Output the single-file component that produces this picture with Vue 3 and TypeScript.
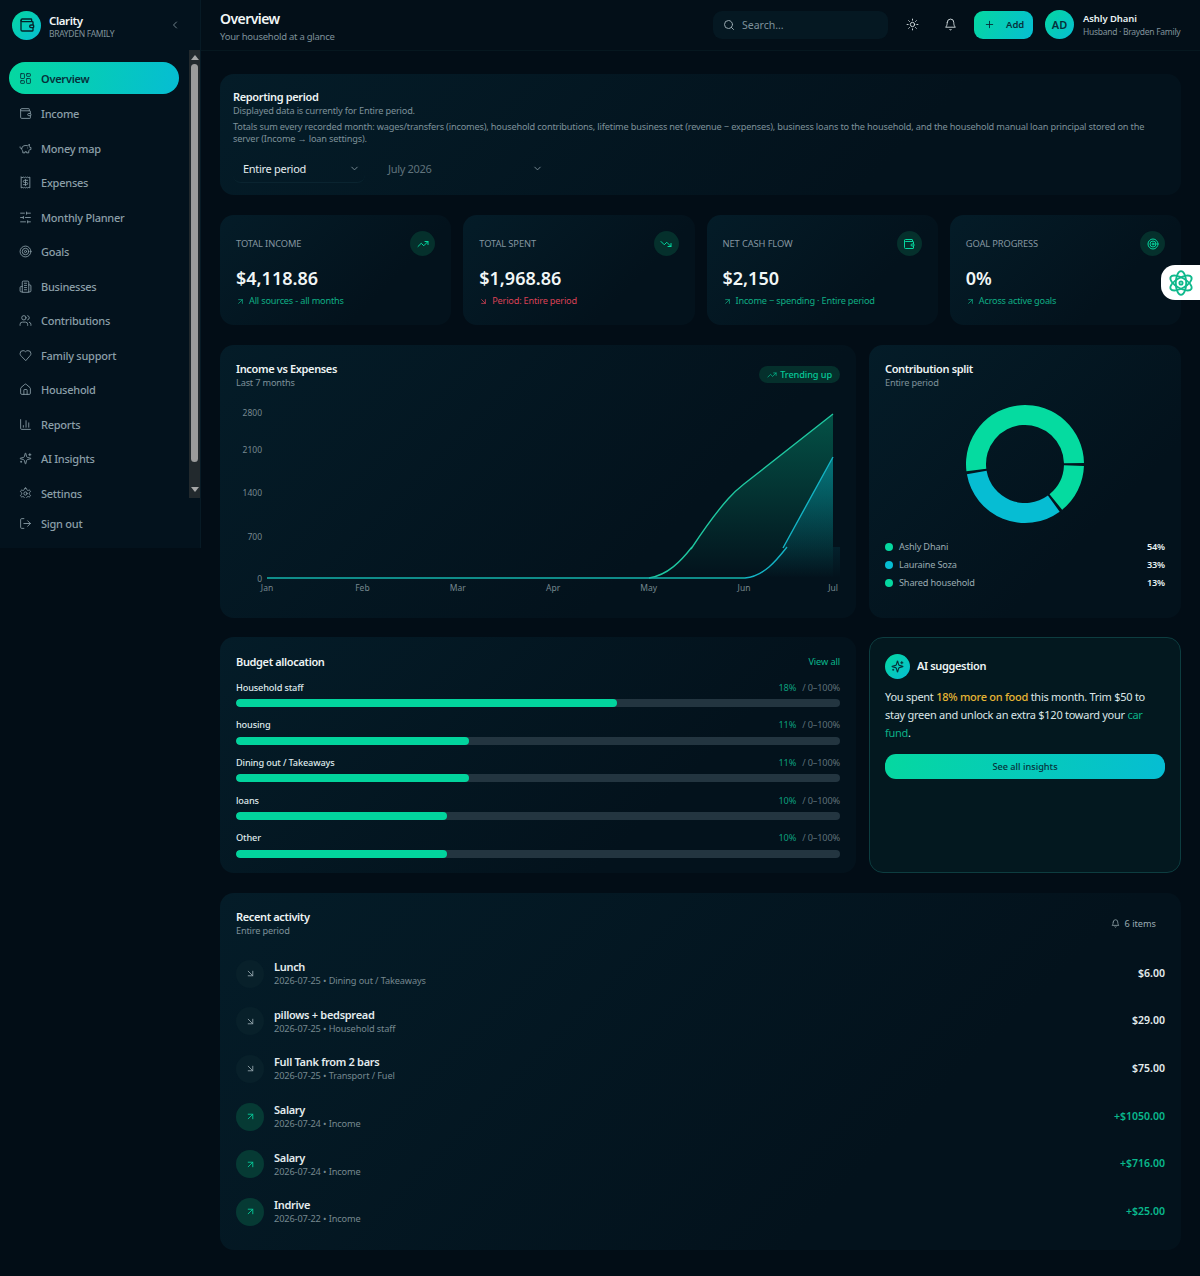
<script setup lang="ts">
const icons: Record<string, string> = {
  wallet: '<path d="M19 7V4a1 1 0 0 0-1-1H5a2 2 0 0 0 0 4h15a1 1 0 0 1 1 1v4h-3a2 2 0 0 0 0 4h3a1 1 0 0 0 1-1v-2a1 1 0 0 0-1-1"/><path d="M3 5v14a2 2 0 0 0 2 2h15a1 1 0 0 0 1-1v-4"/>',
  grid: '<rect x="3" y="3" width="7" height="9" rx="1"/><rect x="14" y="3" width="7" height="5" rx="1"/><rect x="14" y="12" width="7" height="9" rx="1"/><rect x="3" y="16" width="7" height="5" rx="1"/>',
  piggy: '<path d="M19 5c-1.5 0-2.8 1.4-3 2-3.5-1.5-11-.3-11 5 0 1.8 0 3 2 4.5V20h4v-2h3v2h4v-4c1-.5 1.7-1 2-2h2v-4h-2c0-1-.5-1.5-1-2V5z"/><path d="M2 9v1c0 1.1.9 2 2 2h1"/><path d="M16 11h.01"/>',
  receipt: '<path d="M4 2v20l2-1 2 1 2-1 2 1 2-1 2 1 2-1 2 1V2l-2 1-2-1-2 1-2-1-2 1-2-1-2 1Z"/><path d="M16 8h-6a2 2 0 1 0 0 4h4a2 2 0 1 1 0 4H8"/><path d="M12 17.5v-11"/>',
  sliders: '<path d="M21 4h-7M10 4H3M21 12h-9M8 12H3M21 20h-5M12 20H3M14 2v4M8 10v4M16 18v4"/>',
  target: '<circle cx="12" cy="12" r="10"/><circle cx="12" cy="12" r="6"/><circle cx="12" cy="12" r="2"/>',
  building: '<path d="M6 22V4a2 2 0 0 1 2-2h8a2 2 0 0 1 2 2v18Z"/><path d="M6 12H4a2 2 0 0 0-2 2v6a2 2 0 0 0 2 2h2"/><path d="M18 9h2a2 2 0 0 1 2 2v9a2 2 0 0 1-2 2h-2"/><path d="M10 6h4M10 10h4M10 14h4M10 18h4"/>',
  users: '<path d="M16 21v-2a4 4 0 0 0-4-4H6a4 4 0 0 0-4 4v2"/><circle cx="9" cy="7" r="4"/><path d="M22 21v-2a4 4 0 0 0-3-3.87"/><path d="M16 3.13a4 4 0 0 1 0 7.75"/>',
  heart: '<path d="M19 14c1.49-1.46 3-3.21 3-5.5A5.5 5.5 0 0 0 16.5 3c-1.76 0-3 .5-4.5 2-1.5-1.5-2.74-2-4.5-2A5.5 5.5 0 0 0 2 8.5c0 2.3 1.5 4.05 3 5.5l7 7Z"/>',
  home: '<path d="M3 10a2 2 0 0 1 .709-1.528l7-6a2 2 0 0 1 2.582 0l7 6A2 2 0 0 1 21 10v9a2 2 0 0 1-2 2H5a2 2 0 0 1-2-2z"/><path d="M15 21v-8a1 1 0 0 0-1-1h-4a1 1 0 0 0-1 1v8"/>',
  chart: '<path d="M3 3v16a2 2 0 0 0 2 2h16"/><path d="M8 17v-3M13 17V5M18 17V9"/>',
  sparkles: '<path d="M9.937 15.5A2 2 0 0 0 8.5 14.063l-6.135-1.582a.5.5 0 0 1 0-.962L8.5 9.936A2 2 0 0 0 9.937 8.5l1.582-6.135a.5.5 0 0 1 .963 0L14.063 8.5A2 2 0 0 0 15.5 9.937l6.135 1.581a.5.5 0 0 1 0 .964L15.5 14.063a2 2 0 0 0-1.437 1.437l-1.582 6.135a.5.5 0 0 1-.963 0z"/><path d="M20 3v4M22 5h-4M4 17v2M5 18H3"/>',
  settings: '<path d="M12.22 2h-.44a2 2 0 0 0-2 2v.18a2 2 0 0 1-1 1.73l-.43.25a2 2 0 0 1-2 0l-.15-.08a2 2 0 0 0-2.73.73l-.22.38a2 2 0 0 0 .73 2.73l.15.1a2 2 0 0 1 1 1.72v.51a2 2 0 0 1-1 1.74l-.15.09a2 2 0 0 0-.73 2.73l.22.38a2 2 0 0 0 2.73.73l.15-.08a2 2 0 0 1 2 0l.43.25a2 2 0 0 1 1 1.73V20a2 2 0 0 0 2 2h.44a2 2 0 0 0 2-2v-.18a2 2 0 0 1 1-1.73l.43-.25a2 2 0 0 1 2 0l.15.08a2 2 0 0 0 2.73-.73l.22-.39a2 2 0 0 0-.73-2.73l-.15-.08a2 2 0 0 1-1-1.74v-.5a2 2 0 0 1 1-1.74l.15-.09a2 2 0 0 0 .73-2.73l-.22-.38a2 2 0 0 0-2.73-.73l-.15.08a2 2 0 0 1-2 0l-.43-.25a2 2 0 0 1-1-1.73V4a2 2 0 0 0-2-2z"/><circle cx="12" cy="12" r="3"/>',
  logout: '<path d="M9 21H5a2 2 0 0 1-2-2V5a2 2 0 0 1 2-2h4"/><path d="m16 17 5-5-5-5"/><path d="M21 12H9"/>',
  left: '<path d="m15 18-6-6 6-6"/>',
  down: '<path d="m6 9 6 6 6-6"/>',
  search: '<circle cx="11" cy="11" r="8"/><path d="m21 21-4.3-4.3"/>',
  sun: '<circle cx="12" cy="12" r="4"/><path d="M12 2v2M12 20v2M4.93 4.93l1.41 1.41M17.66 17.66l1.41 1.41M2 12h2M20 12h2M6.34 17.66l-1.41 1.41M19.07 4.93l-1.41 1.41"/>',
  bell: '<path d="M6 8a6 6 0 0 1 12 0c0 7 3 9 3 9H3s3-2 3-9"/><path d="M10.3 21a1.94 1.94 0 0 0 3.4 0"/>',
  plus: '<path d="M5 12h14M12 5v14"/>',
  up: '<path d="M22 7l-8.5 8.5-5-5L2 17"/><path d="M16 7h6v6"/>',
  fall: '<path d="M22 17l-8.5-8.5-5 5L2 7"/><path d="M16 17h6v-6"/>',
  ne: '<path d="M7 7h10v10"/><path d="M7 17 17 7"/>',
  se: '<path d="m7 7 10 10"/><path d="M17 7v10H7"/>',
  atom: '<circle cx="12" cy="12" r="1.5"/><ellipse cx="12" cy="12" rx="11" ry="4.8" transform="rotate(90 12 12)"/><ellipse cx="12" cy="12" rx="11" ry="4.8" transform="rotate(30 12 12)"/><ellipse cx="12" cy="12" rx="11" ry="4.8" transform="rotate(150 12 12)"/>',
}

const nav = [
  ['grid', 'Overview'], ['wallet', 'Income'], ['piggy', 'Money map'], ['receipt', 'Expenses'],
  ['sliders', 'Monthly Planner'], ['target', 'Goals'], ['building', 'Businesses'], ['users', 'Contributions'],
  ['heart', 'Family support'], ['home', 'Household'], ['chart', 'Reports'], ['sparkles', 'AI Insights'], ['settings', 'Settings'],
]

const kpis = [
  { label: 'Total income', value: '$4,118.86', note: 'All sources - all months', icon: 'up', arrow: 'ne', bad: false },
  { label: 'Total spent', value: '$1,968.86', note: 'Period: Entire period', icon: 'fall', arrow: 'se', bad: true },
  { label: 'Net cash flow', value: '$2,150', note: 'Income − spending · Entire period', icon: 'wallet', arrow: 'ne', bad: false },
  { label: 'Goal progress', value: '0%', note: 'Across active goals', icon: 'target', arrow: 'ne', bad: false },
]

const yTicks = [
  { label: '2800', y: 17 }, { label: '2100', y: 54 }, { label: '1400', y: 97 }, { label: '700', y: 141 }, { label: '0', y: 183 },
]
const xTicks = ['Jan', 'Feb', 'Mar', 'Apr', 'May', 'Jun', 'Jul'].map((label, i) => ({ label, x: 31 + i * 95.4 }))

// donut angles are measured counter-clockwise from 3 o'clock
function arc(from: number, to: number) {
  const [cx, cy, R, r] = [60, 60, 59, 39]
  const pt = (rad: number, a: number) => {
    const t = (a * Math.PI) / 180
    return `${(cx + rad * Math.cos(t)).toFixed(2)} ${(cy - rad * Math.sin(t)).toFixed(2)}`
  }
  const big = to - from > 180 ? 1 : 0
  return `M${pt(R, from)}A${R} ${R} 0 ${big} 0 ${pt(R, to)}L${pt(r, to)}A${r} ${r} 0 ${big} 1 ${pt(r, from)}Z`
}
const slices = [
  { d: arc(1, 187), color: '#05dba0' },
  { d: arc(190, 306), color: '#06bdd3' },
  { d: arc(309, 358), color: '#05dba0' },
]
const legend = [
  { name: 'Ashly Dhani', pct: '54%', color: '#05d8a0' },
  { name: 'Lauraine Soza', pct: '33%', color: '#06bdd3' },
  { name: 'Shared household', pct: '13%', color: '#05d8a0' },
]

const budget = [
  { name: 'Household staff', pct: '18%', width: 63 },
  { name: 'housing', pct: '11%', width: 38.5 },
  { name: 'Dining out / Takeaways', pct: '11%', width: 38.5 },
  { name: 'loans', pct: '10%', width: 35 },
  { name: 'Other', pct: '10%', width: 35 },
]

const activity = [
  { title: 'Lunch', meta: '2026-07-25 • Dining out / Takeaways', amount: '$6.00', income: false },
  { title: 'pillows + bedspread', meta: '2026-07-25 • Household staff', amount: '$29.00', income: false },
  { title: 'Full Tank from 2 bars', meta: '2026-07-25 • Transport / Fuel', amount: '$75.00', income: false },
  { title: 'Salary', meta: '2026-07-24 • Income', amount: '+$1050.00', income: true },
  { title: 'Salary', meta: '2026-07-24 • Income', amount: '+$716.00', income: true },
  { title: 'Indrive', meta: '2026-07-22 • Income', amount: '+$25.00', income: true },
]
</script>

<template>
  <div class="app">
    <aside class="sidebar">
      <div class="brand">
        <span class="logo"><svg class="ic" viewBox="0 0 24 24" v-html="icons.wallet"></svg></span>
        <div class="brand-text">
          <strong>Clarity</strong>
          <small>BRAYDEN FAMILY</small>
        </div>
        <svg class="ic collapse" viewBox="0 0 24 24" v-html="icons.left"></svg>
      </div>
      <div class="nav-wrap">
        <nav class="nav">
          <a v-for="(item, i) in nav" :key="item[1]" class="nav-item" :class="{ active: i === 0 }">
            <svg class="ic" viewBox="0 0 24 24" v-html="icons[item[0]]"></svg>
            <span>{{ item[1] }}</span>
          </a>
        </nav>
        <div class="scrollbar">
          <i class="arrow-up"></i>
          <b class="thumb"></b>
          <i class="arrow-down"></i>
        </div>
      </div>
      <a class="nav-item signout">
        <svg class="ic" viewBox="0 0 24 24" v-html="icons.logout"></svg>
        <span>Sign out</span>
      </a>
    </aside>

    <div class="content">
      <header class="topbar">
        <div class="heading">
          <h1>Overview</h1>
          <p>Your household at a glance</p>
        </div>
        <div class="search">
          <svg class="ic" viewBox="0 0 24 24" v-html="icons.search"></svg>
          <span>Search...</span>
        </div>
        <svg class="ic tool sun" viewBox="0 0 24 24" v-html="icons.sun"></svg>
        <svg class="ic tool bell" viewBox="0 0 24 24" v-html="icons.bell"></svg>
        <button class="add">
          <svg class="ic" viewBox="0 0 24 24" v-html="icons.plus"></svg>
          <span>Add</span>
        </button>
        <span class="avatar">AD</span>
        <div class="who">
          <strong>Ashly Dhani</strong>
          <small>Husband · Brayden Family</small>
        </div>
      </header>

      <main class="main">
        <section class="card period">
          <h2>Reporting period</h2>
          <p class="muted first">Displayed data is currently for Entire period.</p>
          <p class="muted">Totals sum every recorded month: wages/transfers (incomes), household contributions, lifetime business net (revenue − expenses), business loans to the household, and the household manual loan principal stored on the server (Income → loan settings).</p>
          <div class="selects">
            <div class="select">
              <span>Entire period</span>
              <svg class="ic" viewBox="0 0 24 24" v-html="icons.down"></svg>
            </div>
            <div class="select disabled">
              <span>July 2026</span>
              <svg class="ic" viewBox="0 0 24 24" v-html="icons.down"></svg>
            </div>
          </div>
        </section>

        <section class="kpis">
          <div v-for="k in kpis" :key="k.label" class="card kpi">
            <div class="kpi-top">
              <span class="kpi-label">{{ k.label }}</span>
              <span class="kpi-icon"><svg class="ic" viewBox="0 0 24 24" v-html="icons[k.icon]"></svg></span>
            </div>
            <div class="kpi-value">{{ k.value }}</div>
            <div class="kpi-note" :class="{ bad: k.bad }">
              <svg class="ic" viewBox="0 0 24 24" v-html="icons[k.arrow]"></svg>
              <span>{{ k.note }}</span>
            </div>
          </div>
        </section>

        <section class="row charts">
          <div class="card chart-card">
            <div class="card-head">
              <div>
                <h2>Income vs Expenses</h2>
                <p class="muted">Last 7 months</p>
              </div>
              <span class="pill">
                <svg class="ic" viewBox="0 0 24 24" v-html="icons.up"></svg>
                Trending up
              </span>
            </div>
            <svg class="line-chart" viewBox="0 0 604 200" width="604" height="200">
              <defs>
                <linearGradient id="gIncome" x1="0" y1="0" x2="0" y2="1">
                  <stop offset="0" stop-color="#05d8a0" stop-opacity=".32" />
                  <stop offset="1" stop-color="#05d8a0" stop-opacity="0" />
                </linearGradient>
                <linearGradient id="gSpent" x1="0" y1="0" x2="0" y2="1">
                  <stop offset="0" stop-color="#06bdd3" stop-opacity=".42" />
                  <stop offset="1" stop-color="#06bdd3" stop-opacity="0" />
                </linearGradient>
              </defs>
              <text v-for="t in yTicks" :key="t.label" x="26" :y="t.y + 3.5" text-anchor="end" class="tick">{{ t.label }}</text>
              <text v-for="(t, i) in xTicks" :key="t.label" :x="i === 6 ? 602 : t.x" y="196" :text-anchor="i === 6 ? 'end' : 'middle'" class="tick">{{ t.label }}</text>
              <path d="M413 183C432 180 445 166 456 152L455 154Q476 122 492 104Q499 96 508 89L597 19V183Z" fill="url(#gIncome)" />
              <path d="M509 183C528 181 540 166 551 152L547 153L597 62V183Z" fill="url(#gSpent)" />
              <path d="M597 152H604V183H597Z" fill="url(#gSpent)" opacity=".2" />
              <path d="M413 183C432 180 445 166 456 152M455 154Q476 122 492 104Q499 96 508 89L597 19" fill="none" stroke="#1fc7a0" stroke-width="1.4" />
              <path d="M509 183C528 181 540 166 551 152M547 153L597 62" fill="none" stroke="#14b3c4" stroke-width="1.4" />
              <path d="M31 183H509" fill="none" stroke="#14b6ae" stroke-width="1.6" />
            </svg>
          </div>

          <div class="card split">
            <h2>Contribution split</h2>
            <p class="muted">Entire period</p>
            <svg class="donut" viewBox="0 0 120 120" width="120" height="120">
              <path v-for="s in slices" :key="s.d" :d="s.d" :fill="s.color" />
            </svg>
            <ul class="legend">
              <li v-for="l in legend" :key="l.name">
                <i :style="{ background: l.color }"></i>
                <span>{{ l.name }}</span>
                <b>{{ l.pct }}</b>
              </li>
            </ul>
          </div>
        </section>

        <section class="row lower">
          <div class="card budget">
            <div class="card-head">
              <h2>Budget allocation</h2>
              <a class="view-all">View all</a>
            </div>
            <div v-for="b in budget" :key="b.name" class="budget-row">
              <div class="budget-text">
                <span class="budget-name">{{ b.name }}</span>
                <span class="budget-pct">{{ b.pct }}<em>/ 0–100%</em></span>
              </div>
              <div class="track"><div class="fill" :style="{ width: b.width + '%' }"></div></div>
            </div>
          </div>

          <div class="card ai">
            <div class="ai-head">
              <span class="ai-icon"><svg class="ic" viewBox="0 0 24 24" v-html="icons.sparkles"></svg></span>
              <h2>AI suggestion</h2>
            </div>
            <p class="ai-text">You spent <span class="amber">18% more on food</span> this month. Trim $50 to stay green and unlock an extra $120 toward your <span class="teal">car fund</span>.</p>
            <button class="insights">See all insights</button>
          </div>
        </section>

        <section class="card recent">
          <div class="card-head">
            <div>
              <h2>Recent activity</h2>
              <p class="muted">Entire period</p>
            </div>
            <span class="count">
              <svg class="ic" viewBox="0 0 24 24" v-html="icons.bell"></svg>
              6 items
            </span>
          </div>
          <div v-for="(a, i) in activity" :key="i" class="tx">
            <span class="tx-icon" :class="{ income: a.income }">
              <svg class="ic" viewBox="0 0 24 24" v-html="icons[a.income ? 'ne' : 'se']"></svg>
            </span>
            <div class="tx-text">
              <strong>{{ a.title }}</strong>
              <small>{{ a.meta }}</small>
            </div>
            <span class="tx-amount" :class="{ income: a.income }">{{ a.amount }}</span>
          </div>
        </section>
      </main>
    </div>

    <!-- assistant launcher floats over the page edge -->
    <button class="launcher"><svg class="ic" viewBox="0 0 24 24" v-html="icons.atom"></svg></button>
  </div>
</template>

<style scoped>
.app {
  display: flex;
  min-height: 1276px;
  position: relative;
  color: #e8f1f2;
  font-family: "Noto Sans", "Open Sans", sans-serif;
  background: #020d16;
  overflow: hidden;
}
.ic {
  display: block;
  flex: none;
  fill: none;
  stroke: currentColor;
  stroke-width: 2;
  stroke-linecap: round;
  stroke-linejoin: round;
}
h1, h2, p { margin: 0; }

.sidebar {
  width: 200px;
  height: 548px;
  flex: none;
  background: #03121d;
  border-right: 1px solid #071a25;
}
.brand {
  height: 50px;
  display: flex;
  align-items: center;
  padding: 0 19px 0 12px;
}
.logo {
  width: 29px;
  height: 29px;
  border-radius: 50%;
  background: linear-gradient(135deg, #05d8a0, #06bdd3);
  color: #04222a;
  display: flex;
  align-items: center;
  justify-content: center;
}
.logo .ic { width: 16px; height: 16px; }
.brand-text { margin: 2px 0 0 8px; flex: 1; display: flex; flex-direction: column; }
.brand-text strong { font-size: 11.5px; line-height: 14px; font-weight: 600; color: #f1f6f6; letter-spacing: -.4px; }
.brand-text small { font-size: 8.5px; line-height: 11px; color: #80929b; letter-spacing: -.3px; }
.collapse { width: 12px; height: 12px; color: #6d7f88; }

.nav-wrap { display: flex; height: 448px; }
.nav { flex: 1; overflow: hidden; padding: 12px 10px 0 9px; }
.nav-item {
  display: flex;
  align-items: center;
  gap: 9px;
  height: 32px;
  margin-bottom: 2.55px;
  padding-left: 10px;
  border-radius: 16px;
  font-size: 11px;
  font-weight: 500;
  color: #8b9fa8;
  letter-spacing: -.25px;
}
.nav-item .ic { width: 13px; height: 13px; stroke-width: 1.6; }
.nav-item.active {
  margin-bottom: 3.5px;
  background: linear-gradient(100deg, #05d8a0, #06bdd3);
  color: #06303a;
  font-weight: 600;
}
.signout { margin: 9px 0 0 9px; }
.scrollbar {
  width: 11px;
  background: #22292d;
  display: flex;
  flex-direction: column;
  align-items: center;
  padding-top: 5px;
}
.arrow-up, .arrow-down {
  width: 0;
  height: 0;
  border-left: 4px solid transparent;
  border-right: 4px solid transparent;
}
.arrow-up { border-bottom: 5px solid #a7a7a7; }
.arrow-down { border-top: 5px solid #a7a7a7; margin-top: 25px; }
.thumb { width: 7px; height: 398px; margin-top: 4px; border-radius: 4px; background: #9b9b9b; }

.content { flex: 1; min-width: 0; }
.topbar {
  height: 51px;
  box-sizing: border-box;
  display: flex;
  align-items: center;
  padding: 0 19px 1px 19px;
  border-bottom: 1px solid #06171f;
  background: #030f18;
}
.heading { flex: 1; padding-top: 4px; }
.heading h1 { font-size: 14px; line-height: 18px; font-weight: 600; letter-spacing: -.55px; color: #f1f6f6; }
.heading p { font-size: 9.5px; line-height: 14px; margin-top: 2px; color: #7e919a; letter-spacing: -.25px; }
.search {
  width: 175px;
  height: 28px;
  box-sizing: border-box;
  display: flex;
  align-items: center;
  gap: 7px;
  padding-left: 10px;
  border-radius: 9px;
  background: #051822;
  font-size: 10.5px;
  color: #7e919a;
}
.search .ic { width: 12px; height: 12px; color: #98a8af; }
.tool { width: 13px; height: 13px; color: #d8e2e4; stroke-width: 1.7; }
.sun { margin-left: 18px; }
.bell { margin-left: 25px; }
.add {
  width: 59px;
  height: 28px;
  margin-left: 17px;
  display: flex;
  align-items: center;
  gap: 11px;
  padding: 0 0 0 10px;
  border: 0;
  border-radius: 9px;
  background: linear-gradient(120deg, #05d8a0, #06bdd3);
  color: #06303a;
  font: 600 9.5px "Noto Sans", sans-serif;
}
.add .ic { width: 11px; height: 11px; }
.avatar {
  width: 29px;
  height: 29px;
  margin-left: 12px;
  border-radius: 50%;
  background: linear-gradient(135deg, #05d8a0, #06bdd3);
  color: #06303a;
  font-size: 11px;
  font-weight: 600;
  display: flex;
  align-items: center;
  justify-content: center;
}
.who { margin-left: 9px; width: 98px; display: flex; flex-direction: column; }
.who strong { font-size: 9.5px; line-height: 13px; font-weight: 600; color: #e8f1f2; letter-spacing: -.1px; }
.who small { font-size: 8.5px; line-height: 13px; color: #80929b; letter-spacing: -.28px; white-space: nowrap; }

.main {
  padding: 23px 19px 26px 19px;
  display: flex;
  flex-direction: column;
}
.card {
  border-radius: 14px;
  background: linear-gradient(135deg, #041c28, #03121c 70%);
  box-sizing: border-box;
}
.card h2 { font-size: 11px; font-weight: 600; line-height: 15px; color: #eef4f4; letter-spacing: -.36px; }
.muted { font-size: 9.2px; line-height: 12px; color: #7e919a; letter-spacing: -.17px; }
.card-head { display: flex; justify-content: space-between; }

.period { height: 121px; padding: 15px 13px 0; }
.period .muted.first { margin-bottom: 4px; line-height: 13px; }
.selects { display: flex; gap: 13px; margin-top: 10px; }
.select {
  width: 132px;
  height: 28px;
  box-sizing: border-box;
  padding: 0 5px 0 10px;
  display: flex;
  align-items: center;
  justify-content: space-between;
  border-bottom: 1px solid #0a2430;
  border-radius: 8px;
  font-size: 11px;
  color: #e3ecee;
  letter-spacing: -.3px;
}
.select .ic { width: 11px; height: 11px; color: #7e919a; }
.select.disabled { width: 170px; color: #60737c; border-color: transparent; }

.kpis { display: grid; grid-template-columns: repeat(4, 1fr); gap: 12px; margin-top: 20px; }
.kpi { height: 110px; padding: 16px 16px 0; }
.kpi-top { display: flex; justify-content: space-between; align-items: center; }
.kpi-label { font-size: 9.3px; text-transform: uppercase; color: #8496a0; letter-spacing: -.1px; }
.kpi-icon {
  width: 25px;
  height: 25px;
  border-radius: 50%;
  background: #05302c;
  color: #05d8a0;
  display: flex;
  align-items: center;
  justify-content: center;
}
.kpi-icon .ic { width: 12px; height: 12px; }
.kpi-value { margin-top: 10px; font-size: 18px; line-height: 24px; font-weight: 600; color: #f1f6f6; }
.kpi-note { display: flex; align-items: center; gap: 4px; margin-top: 4px; font-size: 9.2px; line-height: 14px; color: #0fae84; letter-spacing: -.2px; }
.kpi-note .ic { width: 9px; height: 9px; }
.kpi-note.bad { color: #d94155; }

.row { display: grid; grid-template-columns: 636px 312px; gap: 13px; margin-top: 20px; }
.row.lower { margin-top: 19px; }
.chart-card { height: 273px; padding: 16px 16px 0; }
.chart-card h2, .split h2 { margin-bottom: 1px; }
.line-chart { display: block; margin-top: 6px; }
.tick { font-size: 8.5px; fill: #76888f; font-family: "Noto Sans", sans-serif; }
.pill {
  height: 17px;
  margin: 5px 0 0 0;
  padding: 0 8px;
  display: flex;
  align-items: center;
  gap: 3px;
  border-radius: 9px;
  background: #05302c;
  color: #05c898;
  font-size: 9.2px;
  font-weight: 500;
  letter-spacing: -.1px;
}
.pill .ic { width: 10px; height: 10px; stroke-width: 1.6; }

.split { height: 273px; padding: 16px 16px 0; }
.donut { display: block; margin: 15px auto 0; }
.legend { list-style: none; margin: 13.5px 0 0; padding: 0; }
.legend li { display: flex; align-items: center; height: 18px; font-size: 9.2px; color: #9aabb2; letter-spacing: -.17px; }
.legend i { width: 8px; height: 8px; border-radius: 50%; margin: 0 6px 0 0; }
.legend span { flex: 1; }
.legend b { font-weight: 600; color: #e8f1f2; }

.budget { height: 236px; padding: 17px 16px 0; }
.budget .card-head { align-items: center; margin-bottom: 9px; }
.view-all { font-size: 9.2px; color: #09b98c; letter-spacing: -.1px; }
.budget-row { height: 37.7px; }
.budget-text { display: flex; justify-content: space-between; align-items: center; height: 18px; font-size: 9.2px; letter-spacing: -.15px; }
.budget-name { color: #dfe8ea; font-weight: 500; }
.budget-pct { color: #0b9f7c; }
.budget-pct em { font-style: normal; color: #5e7079; margin-left: 6px; }
.track { height: 8px; margin-top: 3px; border-radius: 4px; background: #233540; overflow: hidden; }
.fill { height: 100%; border-radius: 4px; background: #02d49d; }

.ai {
  height: 236px;
  padding: 16px 15px 0;
  border: 1px solid #0d3d40;
  background: #03181f;
}
.ai-head { display: flex; align-items: center; gap: 7px; }
.ai-head h2 { margin-top: -2px; }
.ai-icon {
  width: 25px;
  height: 25px;
  border-radius: 50%;
  background: linear-gradient(135deg, #05d8a0, #06bdd3);
  color: #063038;
  display: flex;
  align-items: center;
  justify-content: center;
}
.ai-icon .ic { width: 13px; height: 13px; }
.ai-text { margin-top: 9px; font-size: 11px; line-height: 18px; color: #dbe6e7; letter-spacing: -.27px; }
.amber { color: #e5b534; font-weight: 500; }
.teal { color: #0bb188; }
.insights {
  display: block;
  width: 100%;
  height: 25px;
  margin-top: 12px;
  border: 0;
  border-radius: 11px;
  background: linear-gradient(100deg, #05d8a0, #06bdd3);
  color: #06323b;
  font: 500 9.2px "Noto Sans", sans-serif;
}

.recent { height: 357px; margin-top: 20px; padding: 16px 16px 0; }
.recent h2 { margin-bottom: 1px; }
.recent .card-head { margin-bottom: 13px; }
.count {
  margin: 7px 9px 0 0;
  height: 14px;
  display: flex;
  align-items: center;
  gap: 4px;
  font-size: 9.2px;
  color: #9aabb2;
}
.count .ic { width: 9px; height: 9px; }
.tx { display: flex; align-items: center; height: 47.6px; }
.tx-icon {
  width: 28px;
  height: 28px;
  flex: none;
  border-radius: 50%;
  background: #08202a;
  color: #8fa1a9;
  display: flex;
  align-items: center;
  justify-content: center;
}
.tx-icon .ic { width: 11px; height: 11px; }
.tx-icon.income { background: #063a34; color: #05c898; }
.tx-text { flex: 1; margin-left: 10px; display: flex; flex-direction: column; }
.tx-text strong { font-size: 11px; line-height: 14px; font-weight: 600; color: #e3ecee; letter-spacing: -.3px; }
.tx-text small { font-size: 9.2px; line-height: 13px; color: #76888f; letter-spacing: -.12px; }
.tx-amount { margin-bottom: 2px; font-size: 10.5px; font-weight: 600; color: #e3ecee; }
.tx-amount.income { color: #09b98c; }

.launcher {
  position: absolute;
  top: 265px;
  right: 0;
  width: 39px;
  height: 35px;
  padding: 0 0 0 7px;
  border: 0;
  border-radius: 14px 0 0 14px;
  background: #fff;
  color: #10b98c;
}
.launcher .ic { width: 26px; height: 26px; stroke-width: 1.7; }
</style>

<style>
html, body { background: #020d16; }
</style>
